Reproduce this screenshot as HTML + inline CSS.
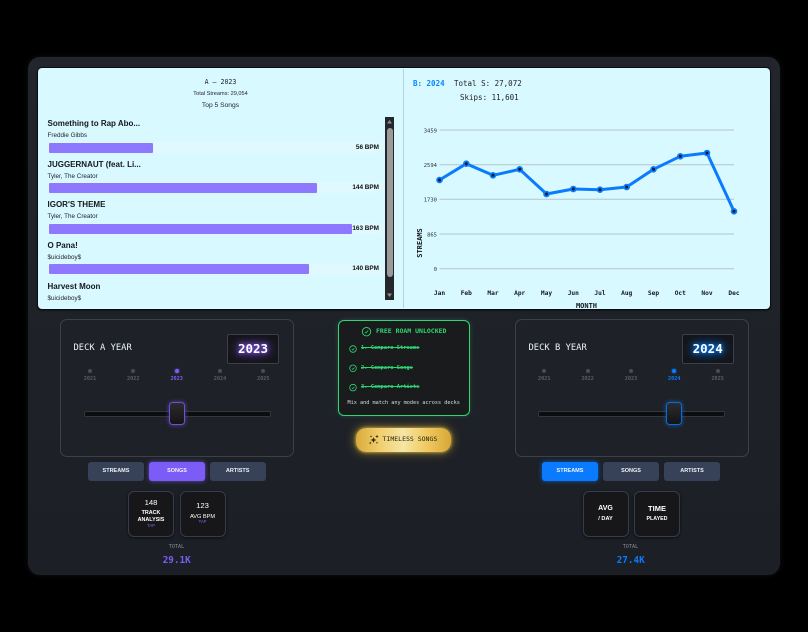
<!DOCTYPE html>
<html><head><meta charset="utf-8">
<style>
*{box-sizing:border-box;margin:0;padding:0}
html,body{width:808px;height:632px;background:#000;overflow:hidden}
body{position:relative;font-family:"Liberation Sans",sans-serif;filter:blur(.25px)}
.a{position:absolute}
.m{font-family:"DejaVu Sans Mono",monospace}
.t{position:absolute;white-space:nowrap}
.c{transform:translateX(-50%);text-align:center}
#panel{left:28px;top:57px;width:752px;height:518px;border-radius:12px;background:linear-gradient(180deg,#22262c,#1e2228 60%,#1c1f25);box-shadow:0 0 6px rgba(70,70,70,.25)}
#screen{left:38px;top:68px;width:732px;height:241px;border-radius:4px;background:#d7f9ff;box-shadow:0 0 0 1px #0b0c0e,0 1px 2px #000}
.title{left:47.5px;font-size:8px;font-weight:bold;color:#16181c;line-height:10px}
.artist{left:47.5px;font-size:6.3px;color:#22252a;line-height:8px}
.track{left:48px;width:335px;height:11px;background:#dff9fe;border-radius:2px}
.bar{left:49px;height:10px;background:#8e78ff;border-radius:1px}
.bpm{right:429px;font-size:6.4px;font-weight:bold;color:#111;line-height:8px}
.deck{top:319px;width:234.5px;height:138px;border:1px solid #3c4047;border-radius:7px;background:#1e2127}
.dt{top:344px;font-size:8.8px;color:#ecf3f5;line-height:9px}
.disp{top:334px;width:52px;height:30px;background:#14151a;border:1px solid #3d3f45;border-radius:2px;color:#fff;font-weight:bold;font-size:12.5px;line-height:28px;text-align:center}
.dot{top:368.5px;width:4px;height:4px;border-radius:50%;background:#4a4d54}
.yl{top:375.5px;font-size:5.2px;line-height:6px;color:#5b5e65;font-weight:bold}
.sl{top:410.5px;width:187px;height:6px;background:#0c0d0f;border:1px solid #34363b;border-radius:2px}
.th{top:402px;width:16px;height:23px;border-radius:3.5px;background:linear-gradient(180deg,#2c2c2e,#141416)}
.btn{top:462px;width:56px;height:18.5px;border-radius:3px;background:#374157;color:#eef2f7;font-size:5.5px;font-weight:bold;text-align:center;line-height:19px}
.card{top:490.5px;width:46px;height:46.5px;border-radius:6px;background:#17171a;border:1px solid #343d50;box-shadow:0 1px 3px rgba(0,0,0,.6)}
.w{color:#fff;font-weight:bold;line-height:8px}
</style></head><body>
<div class="a" id="panel"></div>
<div class="a" id="screen"></div>
<div class="a" style="left:403px;top:69px;width:1px;height:239px;background:#b6d3d9"></div>

<div class="t m c" style="left:220.5px;top:78px;font-size:6.6px;line-height:9px;color:#23262a">A – 2023</div>
<div class="t c" style="left:220.5px;top:90px;font-size:5.6px;line-height:8px;color:#23262a">Total Streams: 29,054</div>
<div class="t c" style="left:220.5px;top:101px;font-size:6.7px;line-height:9px;color:#23262a">Top 5 Songs</div>

<div class="t title" style="top:118.5px">Something to Rap Abo...</div>
<div class="t artist" style="top:131.5px">Freddie Gibbs</div>
<div class="a track" style="top:142px"></div><div class="a bar" style="top:142.5px;width:104px"></div>
<div class="t bpm" style="top:143.5px">56 BPM</div>

<div class="t title" style="top:159.5px">JUGGERNAUT (feat. Li...</div>
<div class="t artist" style="top:172.5px">Tyler, The Creator</div>
<div class="a track" style="top:182px"></div><div class="a bar" style="top:182.5px;width:268px"></div>
<div class="t bpm" style="top:183.5px">144 BPM</div>

<div class="t title" style="top:200px">IGOR'S THEME</div>
<div class="t artist" style="top:213px">Tyler, The Creator</div>
<div class="a track" style="top:223px"></div><div class="a bar" style="top:223.5px;width:303px"></div>
<div class="t bpm" style="top:224.5px">163 BPM</div>

<div class="t title" style="top:241px">O Pana!</div>
<div class="t artist" style="top:254px">$uicideboy$</div>
<div class="a track" style="top:263.5px"></div><div class="a bar" style="top:264px;width:260px"></div>
<div class="t bpm" style="top:265px">140 BPM</div>

<div class="t title" style="top:281.5px">Harvest Moon</div>
<div class="t artist" style="top:294.5px">$uicideboy$</div>

<div class="a" style="left:385px;top:117px;width:9px;height:183px;background:#23262a"></div>
<div class="a" style="left:386.5px;top:128px;width:6px;height:149px;background:#9a9a9a;border-radius:3px"></div>
<svg class="a" style="left:385px;top:117px" width="9" height="183"><path d="M4.5 3L7 6.5H2Z M2 176.5H7L4.5 180Z" fill="#8e8e8e"/></svg>

<svg class="a" style="left:403px;top:68px" width="367" height="241" viewBox="403 68 367 241">
<g font-family="DejaVu Sans Mono,monospace">
<text x="413" y="86" font-size="7.5" fill="#0a84ff" font-weight="bold">B: 2024</text>
<text x="454" y="86" font-size="7.5" fill="#222">Total S: 27,072</text>
<text x="460" y="100" font-size="7.5" fill="#222">Skips: 11,601</text>
<g stroke="#b3c5c9" stroke-width="1"><path d="M439.5 130H734M439.5 164.7H734M439.5 199.3H734M439.5 234H734M439.5 268.7H734"/></g>
<g font-size="5.5" fill="#333" text-anchor="end">
<text x="437" y="132.5">3459</text><text x="437" y="167">2594</text><text x="437" y="201.5">1730</text><text x="437" y="236.5">865</text><text x="437" y="271">0</text>
</g>
<polyline fill="none" stroke="#0a7bff" stroke-width="3" stroke-linejoin="round" points="439.5,180 466.3,163.7 493,175.3 519.7,169.3 546.5,194 573.3,189 600,189.7 626.7,187 653.5,169.3 680.3,156.3 707,153 734,211.3"/>
<g fill="#0e1a2b" stroke="#0a7bff" stroke-width="1.8">
<circle cx="439.5" cy="180" r="2.4"/><circle cx="466.3" cy="163.7" r="2.4"/><circle cx="493" cy="175.3" r="2.4"/><circle cx="519.7" cy="169.3" r="2.4"/><circle cx="546.5" cy="194" r="2.4"/><circle cx="573.3" cy="189" r="2.4"/><circle cx="600" cy="189.7" r="2.4"/><circle cx="626.7" cy="187" r="2.4"/><circle cx="653.5" cy="169.3" r="2.4"/><circle cx="680.3" cy="156.3" r="2.4"/><circle cx="707" cy="153" r="2.4"/><circle cx="734" cy="211.3" r="2.4"/>
</g>
<g font-size="6.2" font-weight="bold" fill="#15181c" text-anchor="middle">
<text x="439.5" y="295">Jan</text><text x="466.3" y="295">Feb</text><text x="493" y="295">Mar</text><text x="519.7" y="295">Apr</text><text x="546.5" y="295">May</text><text x="573.3" y="295">Jun</text><text x="600" y="295">Jul</text><text x="626.7" y="295">Aug</text><text x="653.5" y="295">Sep</text><text x="680.3" y="295">Oct</text><text x="707" y="295">Nov</text><text x="734" y="295">Dec</text>
<text x="586.5" y="308" font-size="7">MONTH</text>
<text transform="translate(422,243) rotate(-90)" font-size="7">STREAMS</text>
</g>
</g>
</svg>

<!-- Deck A -->
<div class="a deck" style="left:59.5px"></div>
<div class="t m dt" style="left:73.5px">DECK A YEAR</div>
<div class="a disp m" style="left:227px;text-shadow:0 0 4px #8b5cf6,0 0 8px #8b5cf6;background:radial-gradient(ellipse at center,#2d2148,#14151a 75%)">2023</div>
<div class="a dot" style="left:88px"></div><div class="a dot" style="left:131.3px"></div><div class="a dot" style="left:174.7px;background:#7c5cf6;box-shadow:0 0 2px #7c5cf6"></div><div class="a dot" style="left:218px"></div><div class="a dot" style="left:261.3px"></div>
<div class="t yl m c" style="left:90px">2021</div><div class="t yl m c" style="left:133.3px">2022</div><div class="t yl m c" style="left:176.7px;color:#7c5cf6">2023</div><div class="t yl m c" style="left:220px">2024</div><div class="t yl m c" style="left:263.3px">2025</div>
<div class="a sl" style="left:83.5px"></div>
<div class="a th" style="left:168.7px;border:1.3px solid #6d4fd8;box-shadow:0 0 5px rgba(124,92,246,.6)"></div>

<!-- Deck B -->
<div class="a deck" style="left:514.5px"></div>
<div class="t m dt" style="left:528.5px">DECK B YEAR</div>
<div class="a disp m" style="left:681.7px;text-shadow:0 0 4px #0a84ff,0 0 8px #0a84ff;background:radial-gradient(ellipse at center,#0d2a50,#14151a 75%)">2024</div>
<div class="a dot" style="left:542.3px"></div><div class="a dot" style="left:585.7px"></div><div class="a dot" style="left:629px"></div><div class="a dot" style="left:672.3px;background:#0a7bff;box-shadow:0 0 2px #0a7bff"></div><div class="a dot" style="left:715.7px"></div>
<div class="t yl m c" style="left:544.3px">2021</div><div class="t yl m c" style="left:587.7px">2022</div><div class="t yl m c" style="left:631px">2023</div><div class="t yl m c" style="left:674.3px;color:#0a7bff">2024</div><div class="t yl m c" style="left:717.7px">2025</div>
<div class="a sl" style="left:538.3px"></div>
<div class="a th" style="left:666px;border:1.3px solid #0a6be0;box-shadow:0 0 5px rgba(10,123,255,.6)"></div>

<!-- Center -->
<div class="a" style="left:338px;top:319.5px;width:131.5px;height:96.5px;border:1.3px solid #2ed573;border-radius:6px;background:#1a1b1d;box-shadow:0 0 4px rgba(46,213,115,.25)"></div>
<svg class="a" style="left:338px;top:319px" width="132" height="80" fill="none" stroke="#2ed573">
<circle cx="28.5" cy="12.7" r="4.2" stroke-width=".9"/><path d="M26.8 13L28 14L30.2 11.4" stroke-width=".8"/>
<circle cx="15" cy="30" r="3.3" stroke-width=".8"/><path d="M13.8 30.3L14.8 31.1L16.4 29.2" stroke-width=".7"/>
<circle cx="15" cy="49.3" r="3.3" stroke-width=".8"/><path d="M13.8 49.6L14.8 50.4L16.4 48.5" stroke-width=".7"/>
<circle cx="15" cy="68.6" r="3.3" stroke-width=".8"/><path d="M13.8 68.9L14.8 69.7L16.4 67.8" stroke-width=".7"/>
</svg>
<div class="t m" style="left:376px;top:327px;font-size:6.5px;line-height:9px;color:#2ed573;font-weight:bold">FREE ROAM UNLOCKED</div>
<div class="t m" style="left:361px;top:345px;font-size:5.4px;line-height:7px;color:#2ed573;font-weight:bold;text-decoration:line-through">1. Compare Streams</div>
<div class="t m" style="left:361px;top:364.5px;font-size:5.4px;line-height:7px;color:#2ed573;font-weight:bold;text-decoration:line-through">2. Compare Songs</div>
<div class="t m" style="left:361px;top:384px;font-size:5.4px;line-height:7px;color:#2ed573;font-weight:bold;text-decoration:line-through">3. Compare Artists</div>
<div class="t m c" style="left:403.7px;top:400px;font-size:5.2px;line-height:7px;color:#d8dde0">Mix and match any modes across decks</div>

<div class="a" style="left:356px;top:427.5px;width:95px;height:24px;border-radius:10px;background:linear-gradient(90deg,#d9aa3a,#f0cf6d 25%,#f6e5a4 50%,#efc95f 75%,#d8a738);box-shadow:0 0 10px rgba(240,190,50,.65),0 0 3px rgba(255,220,110,.8)"></div>
<svg class="a" style="left:368px;top:434px" width="11" height="11" fill="#2a2410"><path d="M5.5 3.2L6.4 5.3L8.5 6L6.4 6.8L5.5 9L4.6 6.8L2.5 6L4.6 5.3Z"/><path d="M9 .8L9.5 2L10.7 2.5L9.5 3L9 4.2L8.5 3L7.3 2.5L8.5 2Z"/><path d="M2.2 7.6L2.6 8.6L3.6 9L2.6 9.4L2.2 10.4L1.8 9.4L.8 9L1.8 8.6Z"/><circle cx="3" cy="2.5" r=".7"/><circle cx="9" cy="8.8" r=".7"/></svg>
<div class="t m" style="left:382.5px;top:435px;font-size:6.5px;line-height:9px;color:#2a2410">TIMELESS SONGS</div>

<!-- Buttons A -->
<div class="a btn" style="left:88px">STREAMS</div>
<div class="a btn" style="left:149px;background:#7c5cf6;box-shadow:0 0 5px rgba(124,92,246,.7)">SONGS</div>
<div class="a btn" style="left:209.7px">ARTISTS</div>
<!-- Buttons B -->
<div class="a btn" style="left:542px;background:#0a7bff;box-shadow:0 0 5px rgba(10,123,255,.7)">STREAMS</div>
<div class="a btn" style="left:603px">SONGS</div>
<div class="a btn" style="left:664px">ARTISTS</div>

<!-- Cards A -->
<div class="a card" style="left:128px"></div>
<div class="t w c" style="left:151px;top:498.5px;font-size:7.7px;font-weight:normal">148</div>
<div class="t w c" style="left:151px;top:508.7px;font-size:5.4px">TRACK</div>
<div class="t w c" style="left:151px;top:516px;font-size:5.4px">ANALYSIS</div>
<div class="t c" style="left:151px;top:522.7px;font-size:4.2px;line-height:6px;color:#8b5cf6">TAP</div>
<div class="a card" style="left:179.5px"></div>
<div class="t w c" style="left:202.5px;top:502px;font-size:7.7px;font-weight:normal">123</div>
<div class="t w c" style="left:202.5px;top:512.7px;font-size:5.6px;font-weight:normal">AVG BPM</div>
<div class="t c" style="left:202.5px;top:519px;font-size:4.2px;line-height:6px;color:#8b5cf6">TAP</div>
<!-- Cards B -->
<div class="a card" style="left:582.5px"></div>
<div class="t w c" style="left:605.5px;top:505px;font-size:7px">AVG</div>
<div class="t w c" style="left:605.5px;top:515.3px;font-size:5.6px">/ DAY</div>
<div class="a card" style="left:634px"></div>
<div class="t w c" style="left:657px;top:505px;font-size:7.5px">TIME</div>
<div class="t w c" style="left:657px;top:515.3px;font-size:5.3px">PLAYED</div>

<div class="t m c" style="left:176.5px;top:544px;font-size:5px;line-height:6px;letter-spacing:.1px;color:#8b8f95">TOTAL</div>
<div class="t m c" style="left:176.7px;top:555px;font-size:9.3px;line-height:11px;font-weight:bold;color:#7c5cf6">29.1K</div>
<div class="t m c" style="left:630.5px;top:544px;font-size:5px;line-height:6px;letter-spacing:.1px;color:#8b8f95">TOTAL</div>
<div class="t m c" style="left:630.7px;top:555px;font-size:9.3px;line-height:11px;font-weight:bold;color:#0a7bff">27.4K</div>
</body></html>
